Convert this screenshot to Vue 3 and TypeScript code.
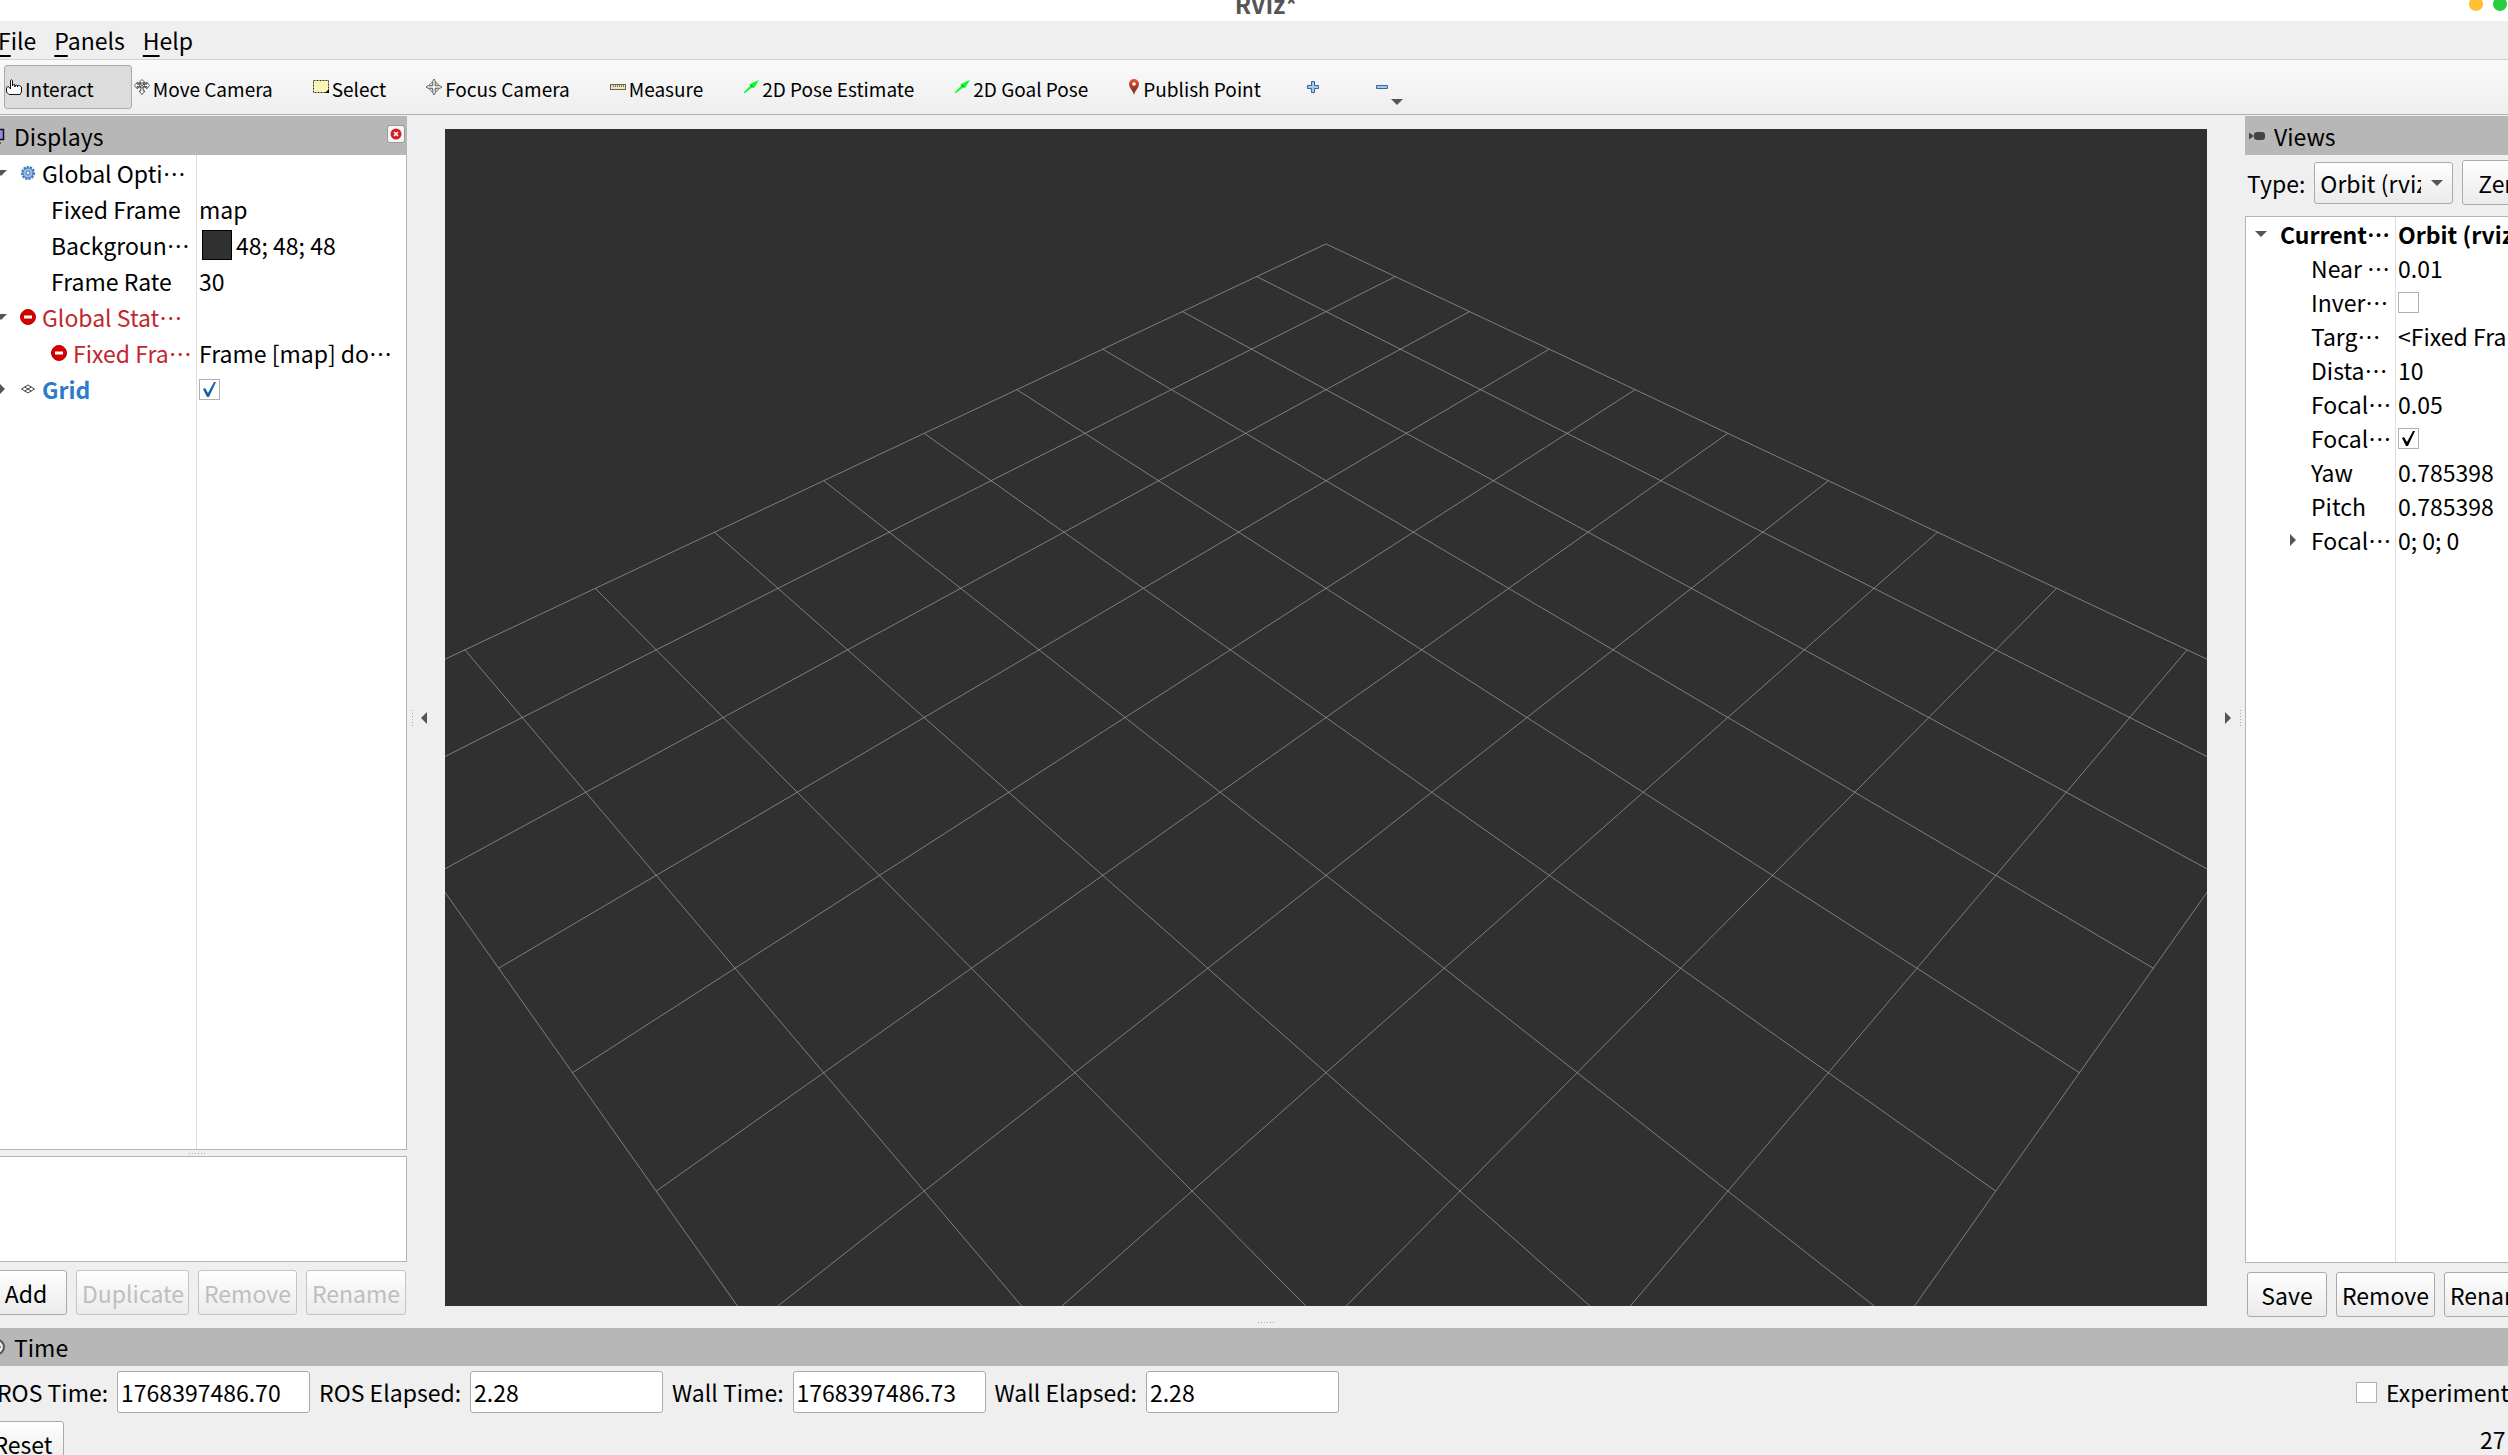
<script setup lang="ts">
import { ref } from 'vue'

interface Tool { name: string; icon: string }
interface Line { x1: number; y1: number; x2: number; y2: number }
interface Row {
  name: string
  value?: string
  level: number
  arrow?: 'open' | 'closed'
  icon?: 'gear' | 'error' | 'grid'
  tone?: 'error' | 'link' | 'bold'
  swatch?: string
  checked?: boolean
}

const menus = ['File', 'Panels', 'Help']
const tools: Tool[] = [
  { name: 'Interact', icon: 'hand' },
  { name: 'Move Camera', icon: 'move' },
  { name: 'Select', icon: 'select' },
  { name: 'Focus Camera', icon: 'focus' },
  { name: 'Measure', icon: 'measure' },
  { name: '2D Pose Estimate', icon: 'arrow' },
  { name: '2D Goal Pose', icon: 'arrow' },
  { name: 'Publish Point', icon: 'pin' },
]
const active = ref('Interact')

const displays = ref<Row[]>([
  { name: 'Global Opti…', level: 0, arrow: 'open', icon: 'gear' },
  { name: 'Fixed Frame', value: 'map', level: 1 },
  { name: 'Backgroun…', value: '48; 48; 48', level: 1, swatch: '#303030' },
  { name: 'Frame Rate', value: '30', level: 1 },
  { name: 'Global Stat…', level: 0, arrow: 'open', icon: 'error', tone: 'error' },
  { name: 'Fixed Fra…', value: 'Frame [map] do…', level: 1, icon: 'error', tone: 'error' },
  { name: 'Grid', level: 0, arrow: 'closed', icon: 'grid', tone: 'link', checked: true },
])
const views = ref<Row[]>([
  { name: 'Current…', value: 'Orbit (rviz)', level: 0, arrow: 'open', tone: 'bold' },
  { name: 'Near …', value: '0.01', level: 1 },
  { name: 'Inver…', level: 1, checked: false },
  { name: 'Targ…', value: '<Fixed Frame>', level: 1 },
  { name: 'Dista…', value: '10', level: 1 },
  { name: 'Focal…', value: '0.05', level: 1 },
  { name: 'Focal…', level: 1, checked: true },
  { name: 'Yaw', value: '0.785398', level: 1 },
  { name: 'Pitch', value: '0.785398', level: 1 },
  { name: 'Focal…', value: '0; 0; 0', level: 1, arrow: 'closed' },
])

const times = ref([
  { id: 'ros-time', label: 'ROS Time:', value: '1768397486.70' },
  { id: 'ros-elapsed', label: 'ROS Elapsed:', value: '2.28' },
  { id: 'wall-time', label: 'Wall Time:', value: '1768397486.73' },
  { id: 'wall-elapsed', label: 'Wall Elapsed:', value: '2.28' },
])
const experimental = ref(false)

// Orbit camera: 10 m from the origin, yaw and pitch 45 degrees, 45 degree vertical field of view.
const W = 1762
const H = 1177
const focal = H / 2 / Math.tan(Math.PI / 8)
const s = Math.SQRT1_2
function project(x: number, y: number): [number, number] {
  const forward = (x + y) * s
  const right = (x - y) * s
  const depth = 10 + forward * s
  return [W / 2 + (focal * right) / depth, H / 2 - (focal * forward * s) / depth]
}
const gridLines: Line[] = []
for (let i = -5; i <= 5; i++) {
  for (const [a, b] of [[project(i, -5), project(i, 5)], [project(-5, i), project(5, i)]]) {
    gridLines.push({ x1: a[0], y1: a[1], x2: b[0], y2: b[1] })
  }
}
</script>

<template>
  <div class="window" lang="zh-CN">
    <header class="title">
      <span class="caption">RViz*</span>
      <span class="dots"><i class="min"></i><i class="max"></i></span>
    </header>

    <nav class="menu">
      <button v-for="m in menus" :key="m" type="button"><u>{{ m[0] }}</u>{{ m.slice(1) }}</button>
    </nav>

    <div class="toolbar">
      <button v-for="t in tools" :key="t.name" type="button" class="tool" :class="{ active: active === t.name }" @click="active = t.name">
        <svg v-if="t.icon === 'hand'" class="ico" viewBox="0 0 16 16">
          <path d="M4.500 10V1.500Q5.500 0 6.500 1.500V7V6Q7.800 5 9 6V8V6.500Q10.200 5.500 11.500 6.500V8V7Q13.500 5.500 15.500 8V13L14 15.500H3L.5 13V8.500Q2 6.500 3.500 8.500L4.500 10Z" fill="#fff" stroke="#111" />
        </svg>
        <svg v-else-if="t.icon === 'move'" class="ico" viewBox="0 0 16 16" fill="#fff" stroke="#444" stroke-width=".9">
          <path d="M8 .5L11 3.500H9.200V5.200H13V3.500L15.700 6.500L13 9.500V7.500H9.200V12H11L8 15.500L5 12H6.800V7.500H3V9.500L.3 6.500L3 3.500V5.200H6.800V3.500H5Z" />
          <circle cx="8" cy="6.500" r="2.500" />
          <path d="M3 3.500L13 9.500M13 3.500L3 9.500" />
        </svg>
        <svg v-else-if="t.icon === 'select'" class="ico" viewBox="0 0 16 16">
          <rect x=".5" y="1.500" width="15" height="12" fill="#fdf6b6" stroke="#333" stroke-dasharray="2 1" />
          <path d="M16 10V14H12Z" fill="#000" />
        </svg>
        <svg v-else-if="t.icon === 'focus'" class="ico" viewBox="0 0 16 16" fill="#fff" stroke="#555" stroke-width=".9">
          <circle cx="8" cy="8" r="5" /><circle cx="8" cy="8" r="3" />
          <path d="M8 0L9.200 2V6.800H14L16 8L14 9.200H9.200V14L8 16L6.800 14V9.200H2L0 8L2 6.800H6.800V2Z" />
        </svg>
        <svg v-else-if="t.icon === 'measure'" class="ico" viewBox="0 0 16 16">
          <rect x=".5" y="5.500" width="15" height="5" fill="#efe7a4" stroke="#666" />
          <path d="M3.500 6V8M5.500 6V8M7.500 6V8M9.500 6V8M11.500 6V8M13.500 6V8" stroke="#777" />
        </svg>
        <svg v-else-if="t.icon === 'arrow'" class="ico" viewBox="0 0 16 16">
          <path d="M.5 13.500L8 6L7 5L16 1L11 9L9.500 8L2 14Z" fill="#0f2" />
          <path d="M7 5.500L10 8.500" stroke="#063" />
        </svg>
        <svg v-else class="ico pin" viewBox="0 0 12 16">
          <defs>
            <linearGradient id="pinFill" x2="0" y2="1"><stop offset="0" stop-color="#ee5236" /><stop offset="1" stop-color="#5a2a14" /></linearGradient>
          </defs>
          <path d="M6 16C5 11 1 9 1 5A5 5 0 0 1 11 5C11 9 7 11 6 16Z" fill="url(#pinFill)" />
          <circle cx="6" cy="5" r="1.800" fill="#fff" />
        </svg>
        <span>{{ t.name }}</span>
      </button>
      <button type="button" class="plain" aria-label="Add tool">
        <svg class="small" viewBox="0 0 12 12"><path d="M4.500.5H7.500V4.500H11.500V7.500H7.500V11.500H4.500V7.500H.5V4.500H4.500Z" fill="#a9c8ec" stroke="#3465a4" /></svg>
      </button>
      <button type="button" class="plain" aria-label="Remove tool">
        <svg class="small" viewBox="0 0 12 12"><path d="M.5 4.500H11.500V7.500H.5Z" fill="#a9c8ec" stroke="#3465a4" /></svg>
        <svg class="drop" viewBox="0 0 12 6"><path d="M0 0H12L6 6Z" fill="#555" /></svg>
      </button>
    </div>

    <main class="work">
      <section class="displays">
        <h2 class="dock">
          <svg class="dock-ico" viewBox="0 0 16 16"><rect x="1" y="1.500" width="13.500" height="10" fill="#98e" stroke="#111" stroke-width="1.500" /><path d="M5 15H12M8 12V15" stroke="#444" stroke-width="1.500" /></svg>
          <span>Displays</span>
          <button type="button" class="close" aria-label="Close Displays">
            <svg viewBox="0 0 12 12"><circle cx="6" cy="6" r="5.500" fill="#d0212b" /><path d="M4 4L8 8M8 4L4 8" stroke="#fff" stroke-width="1.500" /></svg>
          </button>
        </h2>
        <div class="tree left-tree">
          <table>
            <tbody>
              <tr v-for="(r, i) in displays" :key="i">
                <td class="name" :class="[r.tone, 'l' + r.level]">
                  <svg v-if="r.arrow === 'open'" class="twist" viewBox="0 0 12 12"><path d="M0 3H12L6 9Z" fill="#555" /></svg>
                  <svg v-else-if="r.arrow === 'closed'" class="twist" viewBox="0 0 12 12"><path d="M4 0V12L10 6Z" fill="#555" /></svg>
                  <svg v-if="r.icon === 'gear'" class="mark" viewBox="0 0 16 16">
                    <circle cx="8" cy="8" r="5.500" fill="#8fb3df" stroke="#3d74b8" stroke-width="3" stroke-dasharray="2 1" />
                    <circle cx="8" cy="8" r="5" fill="#9dbce2" stroke="#4a7fc0" /><circle cx="8" cy="8" r="2" fill="#e8f0fa" stroke="#3d74b8" />
                  </svg>
                  <svg v-else-if="r.icon === 'error'" class="mark" viewBox="0 0 16 16">
                    <circle cx="8" cy="8" r="7.500" fill="#d40000" stroke="#b00" /><rect x="4" y="6.500" width="8" height="3" fill="#fff" />
                  </svg>
                  <svg v-else-if="r.icon === 'grid'" class="mark" viewBox="0 0 16 16" fill="none" stroke="#444">
                    <path d="M1.500 8L8 4L14.500 8L8 12ZM4.700 6L11.300 10M11.300 6L4.700 10" />
                  </svg>
                  <span>{{ r.name }}</span>
                </td>
                <td class="value">
                  <input v-if="r.checked !== undefined" v-model="r.checked" class="blue" type="checkbox" :aria-label="r.name" />
                  <i v-if="r.swatch" class="swatch" :style="{ background: r.swatch }"></i>{{ r.value }}
                </td>
              </tr>
            </tbody>
          </table>
        </div>
        <div class="grip flat"></div>
        <div class="help"></div>
        <div class="buttons">
          <button type="button" class="btn add">Add</button>
          <button type="button" class="btn wide" disabled>Duplicate</button>
          <button type="button" class="btn" disabled>Remove</button>
          <button type="button" class="btn" disabled>Rename</button>
        </div>
      </section>

      <div class="side">
        <i class="grip upright"></i>
        <button type="button" class="collapse" aria-label="Hide left panels"><svg viewBox="0 0 6 12"><path d="M6 0V12L0 6Z" fill="#555" /></svg></button>
      </div>

      <svg class="scene" :viewBox="`0 0 ${W} ${H}`" preserveAspectRatio="xMidYMid slice">
        <line v-for="(l, i) in gridLines" :key="i" v-bind="l" stroke="#a0a0a4" stroke-opacity=".7" />
      </svg>

      <div class="side right">
        <button type="button" class="collapse" aria-label="Hide right panels"><svg viewBox="0 0 6 12"><path d="M0 0V12L6 6Z" fill="#555" /></svg></button>
        <i class="grip upright"></i>
      </div>

      <section class="views">
        <h2 class="dock">
          <svg class="dock-ico" viewBox="0 0 16 16"><path d="M0 4.500L5 8L0 11.500Z" fill="#444" /><rect x="5" y="4" width="11" height="8" rx="3" fill="#444" /></svg>
          <span>Views</span>
        </h2>
        <div class="type">
          <label for="view-type">Type:</label>
          <div class="combo">
            <select id="view-type"><option>Orbit (rviz)</option></select>
            <svg viewBox="0 0 12 6"><path d="M0 0H12L6 6Z" fill="#555" /></svg>
          </div>
          <button type="button" class="btn zero">Zero</button>
        </div>
        <div class="tree right-tree">
          <table>
            <tbody>
              <tr v-for="(r, i) in views" :key="i" :class="r.tone">
                <td class="name" :class="'l' + r.level">
                  <svg v-if="r.arrow === 'open'" class="twist" viewBox="0 0 12 12"><path d="M0 3H12L6 9Z" fill="#555" /></svg>
                  <svg v-else-if="r.arrow === 'closed'" class="twist" viewBox="0 0 12 12"><path d="M3 0V12L9 6Z" fill="#555" /></svg>
                  <span>{{ r.name }}</span>
                </td>
                <td class="value">
                  <input v-if="r.checked !== undefined" v-model="r.checked" type="checkbox" :aria-label="r.name" />{{ r.value }}
                </td>
              </tr>
            </tbody>
          </table>
        </div>
        <div class="buttons">
          <button type="button" class="btn save">Save</button>
          <button type="button" class="btn">Remove</button>
          <button type="button" class="btn">Rename</button>
        </div>
      </section>
    </main>

    <div class="grip flat bottom"></div>

    <section class="time">
      <h2 class="dock">
        <svg class="dock-ico" viewBox="0 0 16 16"><circle cx="8" cy="8" r="7" fill="#eee" stroke="#555" stroke-width="2" /><path d="M8 4V8H12" fill="none" stroke="#222" /></svg>
        <span>Time</span>
      </h2>
      <form class="fields" @submit.prevent>
        <template v-for="t in times" :key="t.id">
          <label :for="t.id">{{ t.label }}</label>
          <input :id="t.id" v-model="t.value" type="text" />
        </template>
        <label class="exp"><input v-model="experimental" type="checkbox" />Experimental</label>
      </form>
      <footer class="status">
        <button type="button" class="btn reset">Reset</button>
        <span class="fps">27 fps</span>
      </footer>
    </section>
  </div>
</template>

<style>
body { margin: 0; background: #efefef; }
html, body { overflow: hidden; }
</style>

<style scoped>
.window {
  display: flex; flex-direction: column; height: 100vh; overflow: hidden;
  background: #efefef; color: #000; white-space: nowrap;
  font: 23px/36px "Noto Sans CJK SC", "Noto Sans", sans-serif;
}
.window * { box-sizing: border-box; }
button, input, select { font: inherit; color: inherit; margin: 0; }
svg { display: block; flex: none; }

.title { position: relative; flex: none; height: 21px; background: #fff; display: flex; justify-content: center; align-items: flex-end; overflow: hidden; }
.caption { font-weight: 700; font-size: 24px; line-height: 36px; color: #555; margin: 0 -24px -1px 0; }
.dots { position: absolute; right: 1px; top: -3px; display: flex; gap: 10px; }
.dots i { width: 14px; height: 14px; border-radius: 50%; }
.min { background: #fdc02f; }
.max { background: #28cd41; }

.menu { flex: none; height: 39px; display: flex; gap: 18px; border-bottom: 1px solid #d0d0d0; margin-left: -2px; }
.menu button { border: 0; background: none; padding: 0; line-height: 38px; }
.menu u { text-decoration-thickness: 2px; text-underline-offset: 5px; }

.toolbar { flex: none; height: 55px; display: flex; align-items: center; padding: 0 4px; border-bottom: 1px solid #b2b2b2; background: linear-gradient(#fafafa, #eee); font-size: 19px; }
.tool { height: 44px; display: flex; align-items: center; gap: 3px; padding: 0 37px 0 1px; border: 1px solid transparent; border-radius: 3px; background: none; }
.tool.active { background: #dcdcdc; border-color: #aaa; }
.tool span { line-height: 32px; padding-top: 4px; }
.ico { width: 16px; height: 16px; }
.pin { width: 12px; }
.plain { position: relative; width: 69px; height: 44px; border: 0; background: none; padding: 0 0 0 8px; }
.small { width: 12px; height: 12px; }
.drop { position: absolute; left: 23px; bottom: 4px; width: 12px; height: 6px; }

.work { flex: 1; min-height: 0; display: flex; padding-top: 1px; }
.dock { flex: none; margin: 0; height: 39px; display: flex; align-items: center; gap: 9px; background: #b7b7b7; font: inherit; padding-left: 4px; }
.dock-ico { width: 16px; height: 16px; }
.displays { flex: none; width: 407px; display: flex; flex-direction: column; }
.displays .dock, .time .dock { padding-left: 0; }
.displays .dock-ico, .time .dock-ico { margin-left: -11px; }
.close { width: 18px; height: 18px; margin: 0 2px 4px auto; padding: 2px; border: 1px solid #999; border-radius: 3px; background: #f6f6f6; }
.close svg { width: 12px; height: 12px; }

.tree { flex: 1; min-height: 0; background: #fff; border: 1px solid #b4b4b4; overflow: hidden; display: flex; }
.left-tree { border-left: 0; border-top: 0; }
.tree table { width: 100%; height: 100%; border-collapse: collapse; background: linear-gradient(#ddd, #ddd) 196px 0 / 1px 100% no-repeat; display: block; }
.right-tree { border-right: 0; }
.right-tree table { background-position-x: 149px; }
.tree tbody { display: block; }
.tree tr { display: flex; height: 36px; }
.right-tree tr { height: 34px; line-height: 34px; }
.tree td { display: flex; align-items: center; padding: 0; }
.tree .value { padding-left: 3px; }
.name { flex: none; width: 196px; position: relative; overflow: hidden; }
.left-tree .l0 { gap: 6px; }
.left-tree .l0 .twist { margin: 0 7px 0 -5px; }
.twist { width: 12px; height: 12px; }
.mark { width: 16px; height: 16px; }
.left-tree .l1 { padding-left: 51px; gap: 6px; }
.right-tree .name { width: 149px; }
.right-tree .l0 { padding-left: 9px; gap: 13px; }
.right-tree .l1 { padding-left: 65px; }
.right-tree .l1 .twist { position: absolute; left: 41px; top: 11px; }
.error { color: #c1272d; }
.link { color: #2d7ccb; font-weight: 700; }
.bold { font-weight: 700; }
.swatch { width: 30px; height: 30px; border: 1px solid #000; margin: 0 4px 0 3px; }

input[type="checkbox"] { appearance: none; flex: none; width: 21px; height: 21px; border: 1px solid #b0b0b0; background: #fff center / 15px 15px no-repeat; }
input[type="checkbox"]:checked { background-image: url("data:image/svg+xml,%3Csvg xmlns='http://www.w3.org/2000/svg' viewBox='0 0 15 15'%3E%3Cpath d='M1 7L3 6L6 11L12 0H14L7 15H5Z' fill='%23000'/%3E%3C/svg%3E"); }
input.blue[type="checkbox"]:checked { background-image: url("data:image/svg+xml,%3Csvg xmlns='http://www.w3.org/2000/svg' viewBox='0 0 15 15'%3E%3Cpath d='M1 7L3 6L6 11L12 0H14L7 15H5Z' fill='%231a5fa8'/%3E%3C/svg%3E"); }

.grip { flex: none; background: radial-gradient(circle, #aaa 1px, transparent 1px); background-size: 3px 3px; }
.flat { width: 18px; height: 3px; margin: 2px auto; }
.displays .flat { margin: 2px 0 1px 188px; }
.bottom { margin: 1px 0 4px 1257px; }
.help { flex: none; height: 106px; background: #fff; border: 1px solid #b4b4b4; border-left: 0; }
.buttons { flex: none; display: flex; gap: 9px; padding: 8px 0 5px; }
.btn { flex: none; height: 45px; min-width: 98px; padding: 0 5px; border: 1px solid #aaa; border-radius: 3px; background: linear-gradient(#fefefe, #ebebeb); }
.btn:disabled { color: #bebebe; border-color: #c4c4c4; }
.wide { width: 113px; }
.add { min-width: 0; width: 82px; margin-left: -15px; }
.save { min-width: 0; width: 80px; }
.zero { min-width: 0; width: 78px; text-align: left; padding-left: 15px; }

.side { flex: none; width: 38px; display: flex; align-items: center; gap: 7px; padding-left: 4px; }
.side.right { padding-left: 18px; gap: 8px; }
.upright { width: 3px; height: 18px; }
.collapse { border: 0; padding: 0; background: none; }
.collapse svg { width: 6px; height: 12px; }
.scene { flex: 1; min-width: 0; height: auto; margin: 13px 0 14px; background: #303030; }

.views { flex: none; width: 263px; display: flex; flex-direction: column; overflow: hidden; }
.type { flex: none; display: flex; align-items: center; gap: 9px; padding: 5px 0 11px 2px; }
.type label { width: 60px; }
.combo { position: relative; flex: none; }
.combo select { appearance: none; display: block; width: 139px; height: 42px; padding: 0 31px 0 5px; border: 1px solid #aaa; border-radius: 3px; background: linear-gradient(#fefefe, #ebebeb); overflow: hidden; text-overflow: clip; }
.combo svg { position: absolute; right: 10px; top: 18px; width: 12px; height: 6px; }
.views .buttons { padding: 9px 0 3px 2px; }

.time { flex: none; height: 127px; overflow: hidden; }
.time .dock { height: 38px; }
.fields { display: flex; align-items: center; gap: 9px; padding-top: 5px; margin-left: -3px; }
.fields input[type="text"] { width: 193px; height: 42px; padding: 0 3px; border: 1px solid #aaa; border-radius: 3px; background: #fff; }
.exp { display: flex; align-items: center; gap: 9px; width: 152px; margin-left: auto; }
.status { display: flex; justify-content: space-between; padding-top: 8px; }
.reset { min-width: 0; width: 82px; margin-left: -18px; }
.fps { width: 28px; }
</style>
